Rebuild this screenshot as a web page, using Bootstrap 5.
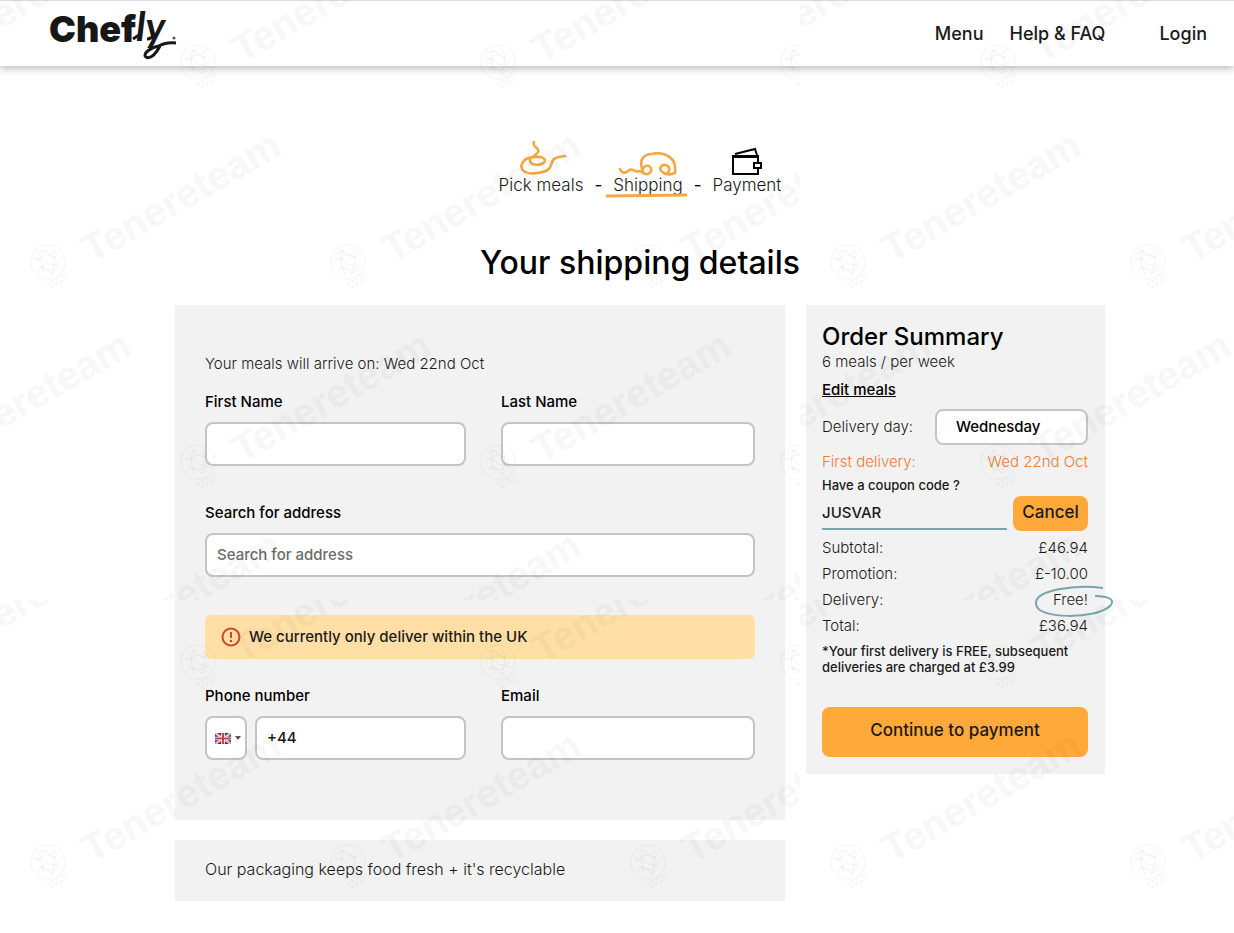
<!DOCTYPE html>
<html lang="en">
<head>
<meta charset="utf-8">
<meta name="viewport" content="width=device-width, initial-scale=1">
<title>Chefly - Your shipping details</title>
<link href="https://cdn.jsdelivr.net/npm/bootstrap@5.3.0/dist/css/bootstrap.min.css" rel="stylesheet">
<style>
  body { font-family: Inter, "Liberation Sans", sans-serif; font-size: 15px; line-height: 24px; color: #000; background: #fff; position: relative; min-height: 100vh; }
  .site-header { border-top: 1px solid #dadada; box-shadow: 0 2px 8px rgba(0,0,0,.3); padding: 0 27px 0 47px; height: 66px; }
  .site-header .nav-link { font-size: 18px; font-weight: 500; color: #1a1a1a; padding: 0; }
  .top-links { column-gap: 26px; }
  .login { margin-left: 28px; }
  .page-main { padding: 74px 0 32px 46px; }
  .page-width { max-width: 930px; }
  .thin { font-weight: 300; color: #1a1a1a; }
  .steps { font-size: 17px; line-height: 18px; gap: 11px; margin-bottom: 48px; }
  .steps a { color: #1a1a1a; text-decoration: none; font-weight: 300; }
  .step-mark { position: absolute; left: -7px; right: -7px; bottom: -4px; }
  h1 { font-size: 32px; line-height: 42px; font-weight: 500; margin-bottom: 21px; }
  .panel { background: #f2f2f2; }
  .left-side { width: 610px; }
  .form-panel { padding: 47px 30px 60px; }
  .arrive { margin-bottom: 14px; }
  .address { margin: 35px 0 38px; }
  .contact { margin-top: 25px; }
  .pack { margin-top: 20px; padding: 17px 30px 20px; font-size: 16px; font-weight: 300; color: #1a1a1a; }
  .pair { display: grid; grid-template-columns: 261fr 254fr; column-gap: 35px; }
  .form-label { font-weight: 500; margin-bottom: 8px; display: block; }
  .form-control, .form-select { border: 2px solid #c4c4c4; border-radius: 8px; height: 44px; padding: 0 10px 2px; font-size: 15px; font-weight: 500; color: #1a1a1a; background-color: #fff; }
  .form-control::placeholder { color: #6c6c6c; }
  .flag-btn { width: 42px; height: 44px; border: 2px solid #c4c4c4; border-radius: 8px; background: #fff; padding: 0 0 0 8px; }
  .notice { background: #ffdfa6; border-radius: 6px; height: 44px; padding: 0 16px; font-weight: 500; color: #1a1a1a; }
  .side-panel { width: 299px; padding: 17px 17px 17px 16px; }
  h2 { font-size: 24px; line-height: 30px; font-weight: 500; }
  .per-week { line-height: 20px; margin-bottom: 8px; }
  .edit { display: block; line-height: 20px; color: #000; font-weight: 500; margin-bottom: 9px; }
  .day-select { width: 153px; height: 36px; padding: 0 19px; background-image: none; color: #000; }
  .accent { color: #ee7c35; font-weight: 300; }
  .first { margin-top: 5px; }
  .fine { font-size: 13px; line-height: 16px; font-weight: 500; color: #1a1a1a; }
  .code-label { display: block; margin: 3px 0; }
  .coupon { border: 0; border-bottom: 2px solid #76a5ab; border-radius: 0; background: transparent; height: 34px; padding: 0; width: 185px; }
  .btn-brand { background: #ffa93a; color: #1a1a1a; border: 0; border-radius: 8px; font-weight: 500; font-size: 17px; }
  .btn-brand:hover { background: #f59b25; }
  .cancel { width: 75px; height: 35px; padding: 0 0 2px; }
  .sums { margin: 4px 0 0; }
  .sums > div { height: 26px; line-height: 26px; }
  .ring { position: absolute; left: -20px; top: -2px; width: 82px; height: 34px; }
  .note { margin: 4px 0 32px; }
  .pay { height: 50px; padding-bottom: 8px; }
  .watermark { position: absolute; inset: 0; width: 100%; height: 100%; pointer-events: none; z-index: 10; }
</style>
</head>
<body>
<header class="site-header d-flex align-items-center justify-content-between bg-white">
  <a href="#" aria-label="Chefly home">
    <svg width="140" height="64" viewBox="0 0 140 64" class="d-block">
      <text x="2" y="40" font-family="Inter" font-weight="900" font-size="36" fill="#171717">Chef</text>
      <text x="89" y="39" font-family="Lato" font-style="italic" font-weight="700" font-size="40" fill="#171717">ly</text>
      <path d="M112 44C104 45 95 52 99 55C104 58 110 50 113 44M110 45Q118 40 129 41" fill="none" stroke="#171717" stroke-width="3"/>
      <path d="M86 37L92 33M100 37Q105 37 108 31" fill="none" stroke="#171717" stroke-width="3"/>
      <circle cx="127" cy="36" r="1.500" fill="#555"/>
    </svg>
  </a>
  <nav class="d-flex top-links" aria-label="Main">
    <a class="nav-link" href="#">Menu</a>
    <a class="nav-link" href="#">Help &amp; FAQ</a>
    <a class="nav-link login" href="#">Login</a>
  </nav>
</header>

<main class="page-main">
  <div class="page-width mx-auto">
    <nav class="steps d-flex justify-content-center align-items-end" aria-label="Checkout steps">
      <a href="#" class="d-flex flex-column align-items-center">
        <svg width="52" height="36" viewBox="-4 0 52 36" fill="none" stroke="#f5a742" stroke-width="2.600" stroke-linecap="round"><path d="M15 2C12 7 22 8 19 12C17 16 10 17 11 21C13 27 27 25 26 20C24 15 7 16 4 22C-1 30 7 35 18 33C23 32 30 32 32 25C34 19 35 18 40 17L46 16"/></svg>
        <span>Pick meals</span>
      </a>
      <span>-</span>
      <a href="#" class="d-flex flex-column align-items-center position-relative" aria-current="step">
        <svg width="60" height="24" viewBox="0 1 60 24" fill="none" stroke="#f5a742" stroke-width="2.600" stroke-linecap="round"><path d="M2 18C4 23 8 22 10 20S14 18 17 20S21 18 25 22C32 26 36 18 31 15C25 13 22 22 27 23M24 18C21 7 27 3 34 3Q42 1 48 4C56 7 58 14 57 22Q50 25 46 22C39 19 43 13 48 14C53 16 52 22 47 23"/></svg>
        <span>Shipping</span>
        <svg class="step-mark" width="82" height="5" viewBox="0 0 82 5"><path d="M0 3L81 2" stroke="#f5a742" stroke-width="3"/></svg>
      </a>
      <span>-</span>
      <a href="#" class="d-flex flex-column align-items-center">
        <svg width="32" height="29" viewBox="0 0 32 29" fill="none" stroke="#000" stroke-width="2"><path d="M2 9H27V27H2ZM2 10H27M4 7L24 2L26 8"/><path d="M23 16H30V21H23Z" fill="#fff"/></svg>
        <span>Payment</span>
      </a>
    </nav>
    <h1 class="text-center">Your shipping details</h1>

    <div class="d-flex align-items-start justify-content-between">
      <div class="left-side">
        <form class="panel form-panel" id="shipping">
          <p class="thin arrive">Your meals will arrive on: Wed 22nd Oct</p>
          <div class="pair">
            <div><label class="form-label" for="first">First Name</label><input class="form-control" id="first"></div>
            <div><label class="form-label" for="last">Last Name</label><input class="form-control" id="last"></div>
          </div>
          <div class="address">
            <label class="form-label" for="addr">Search for address</label>
            <input class="form-control" id="addr" placeholder="Search for address">
          </div>
          <div class="notice d-flex align-items-center" role="note">
            <svg width="20" height="20" viewBox="0 0 20 20" class="me-2" fill="none" stroke="#cc4a2b" stroke-width="2"><circle cx="10" cy="10" r="8.500"/><path d="M10 5V11M10 13V15"/></svg>
            <span>We currently only deliver within the UK</span>
          </div>
          <div class="pair contact">
            <div>
              <label class="form-label" for="phone">Phone number</label>
              <div class="d-flex gap-2">
                <button type="button" class="flag-btn d-flex align-items-center flex-shrink-0" aria-label="Country code">
                  <svg width="16" height="11" viewBox="0 0 16 11"><path fill="#35356f" d="M0 0H16V11H0Z"/><path d="M0 0L16 11M16 0L0 11" stroke="#fff" stroke-width="2.200"/><path d="M0 0L16 11M16 0L0 11" stroke="#d84a5b" stroke-width=".7"/><path d="M8 0V11M0 5.500H16" stroke="#fff" stroke-width="3.600"/><path d="M8 0V11M0 5.500H16" stroke="#d8364a" stroke-width="2"/></svg>
                  <svg width="6" height="4" viewBox="0 0 6 4" class="ms-1"><path d="M0 0H6L3 4Z" fill="#555"/></svg>
                </button>
                <input class="form-control" id="phone" type="tel" value="+44">
              </div>
            </div>
            <div><label class="form-label" for="email">Email</label><input class="form-control" id="email" type="email"></div>
          </div>
        </form>
        <section class="panel pack">Our packaging keeps food fresh + it's recyclable</section>
      </div>

      <aside class="panel side-panel flex-shrink-0">
        <h2 class="mb-0">Order Summary</h2>
        <p class="thin per-week">6 meals / per week</p>
        <a href="#" class="edit">Edit meals</a>
        <div class="d-flex justify-content-between align-items-center">
          <label for="day" class="thin">Delivery day:</label>
          <select id="day" class="form-select day-select"><option>Wednesday</option></select>
        </div>
        <div class="d-flex justify-content-between accent first"><span>First delivery:</span><span>Wed 22nd Oct</span></div>
        <label class="fine code-label" for="code">Have a coupon code ?</label>
        <div class="d-flex justify-content-between">
          <input id="code" class="form-control coupon" value="JUSVAR">
          <button type="button" class="btn btn-brand cancel">Cancel</button>
        </div>
        <div class="sums thin">
          <div class="d-flex justify-content-between"><span>Subtotal:</span><span>£46.94</span></div>
          <div class="d-flex justify-content-between"><span>Promotion:</span><span>£-10.00</span></div>
          <div class="d-flex justify-content-between"><span>Delivery:</span><span class="position-relative">Free!
            <svg class="ring" viewBox="0 0 82 34" fill="none" stroke="#76a5ab" stroke-width="2"><path d="M70 3C43-1 1 5 3 19C4 35 64 34 77 21C83 15 76 11 62 11"/></svg></span></div>
          <div class="d-flex justify-content-between"><span>Total:</span><span>£36.94</span></div>
        </div>
        <p class="fine note">*Your first delivery is FREE, subsequent deliveries are charged at £3.99</p>
        <button type="submit" form="shipping" class="btn btn-brand w-100 pay">Continue to payment</button>
      </aside>
    </div>
  </div>
</main>
<svg class="watermark" aria-hidden="true">
  <defs>
    <g id="wm">
      <g fill="none" stroke="#000" stroke-opacity=".04">
        <circle r="17"/>
        <path d="M-11-8Q-5-14 0-8T11-8M-13 0Q-7-6-2 0T11 0M-10 8Q-5 2 0 8T10 7M-5-13Q-9 0-3 13M5-13Q9 0 3 14M-8-3Q0-12 8-3M-8 4Q0 13 9 3M-14-4L-8-3M8 4L14 6"/>
        <path d="M-1 22L18 12M3 25L17 18" stroke-width="3" stroke-dasharray="3 2" stroke-opacity=".03"/>
      </g>
      <text transform="translate(44 2) rotate(-30)" font-family="Liberation Sans, sans-serif" font-weight="700" font-size="40" fill="#000" fill-opacity=".03">Tenereteam</text>
    </g>
    <pattern id="tile" width="800" height="600" patternUnits="userSpaceOnUse">
      <use href="#wm" x="-102" y="62"/><use href="#wm" x="198" y="62"/><use href="#wm" x="498" y="62"/><use href="#wm" x="798" y="62"/>
      <use href="#wm" x="-252" y="262"/><use href="#wm" x="48" y="262"/><use href="#wm" x="348" y="262"/><use href="#wm" x="648" y="262"/>
      <use href="#wm" x="-102" y="462"/><use href="#wm" x="198" y="462"/><use href="#wm" x="498" y="462"/><use href="#wm" x="798" y="462"/>
      <use href="#wm" x="48" y="662"/><use href="#wm" x="348" y="662"/><use href="#wm" x="648" y="662"/>
    </pattern>
  </defs>
  <rect width="100%" height="100%" fill="url(#tile)"/>
</svg>
<script src="https://cdn.jsdelivr.net/npm/bootstrap@5.3.0/dist/js/bootstrap.bundle.min.js"></script>
</body>
</html>
